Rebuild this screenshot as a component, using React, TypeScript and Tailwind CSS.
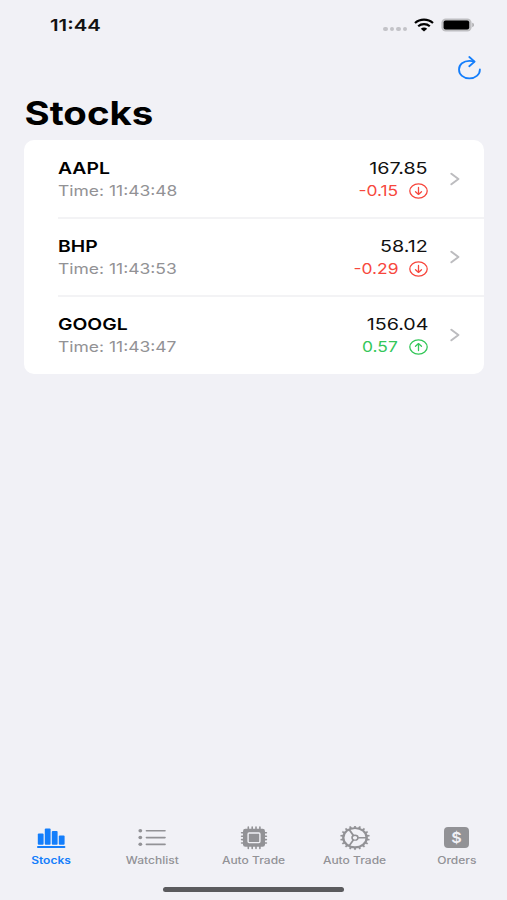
import React from 'react';
import clsx from 'clsx';

interface Stock {
  symbol: string;
  time: string;
  price: string;
  change: string;
  up: boolean;
}

interface Tab {
  label: string;
  icon: React.ReactNode;
  active?: boolean;
}

const stocks: Stock[] = [
  { symbol: 'AAPL', time: '11:43:48', price: '167.85', change: '-0.15', up: false },
  { symbol: 'BHP', time: '11:43:53', price: '58.12', change: '-0.29', up: false },
  { symbol: 'GOOGL', time: '11:43:47', price: '156.04', change: '0.57', up: true },
];

const WifiIcon = () => (
  <svg width="20" height="14" viewBox="0 0 20 14" fill="none" stroke="#000" strokeWidth="2.2">
    <path d="M1 5C6 0.4 14 0.4 19 5" />
    <path d="M4.2 8.2C7.4 5.3 12.6 5.3 15.8 8.2" />
    <path d="M6.8 10.7C8.6 9.2 11.4 9.2 13.2 10.7L10 13.4Z" fill="#000" stroke="none" />
  </svg>
);

const BatteryIcon = () => (
  <svg width="34" height="14" viewBox="0 0 34 14">
    <rect x="0.4" y="0.4" width="30.2" height="13.2" rx="4.4" fill="#bebec1" />
    <rect x="2.6" y="2.6" width="25.6" height="8.8" rx="2" fill="#000" />
    <path d="M31.3 4.8C33.4 5.4 33.4 8.6 31.3 9.2Z" fill="#a5a5a8" />
  </svg>
);

const RefreshIcon = () => (
  <svg width="24" height="24" viewBox="0 0 24 24" fill="none" stroke="#147efb" strokeWidth="1.8" strokeLinecap="round" strokeLinejoin="round">
    <path d="M22.9 13.4C22.9 18.5 18.3 22.4 12.4 22.4C6.5 22.4 2 18.5 2 13.4C2 8.5 6.5 4.9 12.4 4.9C14.1 4.9 15.6 5.1 17 5.6" />
    <path d="M12.3 1L17.6 5.6L12.3 10.2" />
  </svg>
);

const ArrowCircle = ({ up }: { up: boolean }) => (
  <svg width="19" height="16" viewBox="0 0 19 16" fill="none" stroke="currentColor" strokeWidth="1.3" strokeLinecap="round" strokeLinejoin="round">
    <ellipse cx="9.5" cy="8" rx="8.7" ry="7.1" />
    {up ? <path d="M9.5 11.6V4.6M6.5 7.2L9.5 4.6L12.5 7.2" /> : <path d="M9.5 4.4V11.4M6.5 8.8L9.5 11.4L12.5 8.8" />}
  </svg>
);

const Chevron = () => (
  <svg width="10" height="14" viewBox="0 0 10 14" fill="none" stroke="#bcbcbf" strokeWidth="2" strokeLinecap="round" strokeLinejoin="round">
    <path d="M1.4 1.7L8.4 7L1.4 12.3" />
  </svg>
);

const BarsIcon = () => (
  <svg width="30" height="26" viewBox="0 0 30 26" fill="currentColor">
    <rect x="1.8" y="7.4" width="5.8" height="11.4" rx="1" />
    <rect x="8.8" y="2.4" width="5.8" height="16.4" rx="1" />
    <rect x="15.8" y="5" width="5.8" height="13.8" rx="1" />
    <rect x="22.8" y="9.6" width="5.8" height="9.2" rx="1" />
    <rect x="1" y="20" width="28.4" height="1.9" rx="0.9" />
  </svg>
);

const ListIcon = () => (
  <svg width="30" height="26" viewBox="0 0 30 26" fill="currentColor">
    {[4.7, 11.5, 18.3].map((y) => (
      <g key={y}>
        <ellipse cx="3.3" cy={y} rx="1.9" ry="1.7" />
        <rect x="8.6" y={y - 0.8} width="20.2" height="1.7" rx="0.8" />
      </g>
    ))}
  </svg>
);

const ChipIcon = () => (
  <svg width="30" height="26" viewBox="0 0 30 26" fill="none" stroke="currentColor">
    <rect x="4" y="2.8" width="22" height="18" rx="2.4" fill="currentColor" stroke="none" />
    <path d="M9.3 1.1V22.5M13.2 1.1V22.5M17 1.1V22.5M20.9 1.1V22.5M2.6 6.7H27.4M2.6 10.2H27.4M2.6 13.6H27.4M2.6 17H27.4" strokeWidth="1.6" strokeLinecap="round" />
    <rect x="9.1" y="7" width="11.8" height="9.6" rx="1" fill="#929296" stroke="#f0f0f5" strokeWidth="1.4" />
  </svg>
);

const GearIcon = () => (
  <svg width="32" height="26" viewBox="0 0 32 26" fill="none" stroke="currentColor">
    <g transform="translate(16 11.7) scale(1.22 1)">
      <circle r="9.6" strokeWidth="1.9" />
      {Array.from({ length: 18 }, (_, i) => (
        <path key={i} d="M-0.9 -10L-0.6 -12H0.6L0.9 -10Z" fill="currentColor" strokeWidth="0.2" transform={`rotate(${i * 20})`} />
      ))}
      <circle r="2.4" strokeWidth="1.4" />
      <path d="M2.6 0H9.4M-1.3 -2.2L-4.8 -8.2M-1.3 2.2L-4.8 8.2" strokeWidth="1.5" />
    </g>
  </svg>
);

const DollarIcon = () => (
  <div className="mt-[1px] flex h-[21px] w-[25px] items-center justify-center rounded-[4px] bg-[#929296]">
    <span className="scale-x-[1.15] text-[14px] leading-none font-semibold text-[#f0f0f5]">$</span>
  </div>
);

const tabs: Tab[] = [
  { label: 'Stocks', icon: <BarsIcon />, active: true },
  { label: 'Watchlist', icon: <ListIcon /> },
  { label: 'Auto Trade', icon: <ChipIcon /> },
  { label: 'Auto Trade', icon: <GearIcon /> },
  { label: 'Orders', icon: <DollarIcon /> },
];

const StockRow = ({ stock, last }: { stock: Stock; last: boolean }) => (
  <li className="h-[78px] pl-[34px]">
    <div className={clsx('flex h-full items-start pt-[17px] pr-[24px]', !last && 'shadow-[0_1px_0_#f3f3f5,inset_0_-1px_0_#f3f3f5]')}>
      <div className="flex-1">
        <p className="origin-left scale-x-[1.18] text-[16.4px] leading-[22px] font-semibold text-black">{stock.symbol}</p>
        <p className="origin-left scale-x-[1.205] text-[14.5px] leading-[23px] text-[#929295]">Time: {stock.time}</p>
      </div>
      <div className="flex flex-col items-end">
        <p className="origin-right scale-x-[1.2] text-[16.4px] leading-[22px] text-[#111]">{stock.price}</p>
        <div className={clsx('flex h-[23px] items-center gap-[11px]', stock.up ? 'text-[#34c759]' : 'text-[#f7473d]')}>
          <span className="origin-right scale-x-[1.2] text-[14.5px] leading-[23px]">{stock.change}</span>
          <ArrowCircle up={stock.up} />
        </div>
      </div>
      <div className="mt-[15px] ml-[22px]">
        <Chevron />
      </div>
    </div>
  </li>
);

export default function App() {
  return (
    <div className="flex h-[900px] w-[507px] flex-col overflow-hidden bg-[#f1f1f6] font-[Inter,sans-serif]">
      {/* Status bar */}
      <header className="flex h-[49px] items-center justify-between pr-[32px] pl-[50px]">
        <span className="mt-[2px] origin-left scale-x-[1.24] text-[16.4px] leading-none font-semibold text-[#111]">11:44</span>
        <div className="flex items-center">
          <div className="mt-[8px] mr-[7px] flex gap-[2px]">
            {[0, 1, 2, 3].map((i) => (
              <span key={i} className="h-[4px] w-[4.5px] rounded-full bg-[#c3c3c8]" />
            ))}
          </div>
          <WifiIcon />
          <div className="ml-[7px]">
            <BatteryIcon />
          </div>
        </div>
      </header>

      <div className="flex h-[44px] justify-end pt-[7px] pr-[26px]">
        <button className="h-[24px]" aria-label="Refresh">
          <RefreshIcon />
        </button>
      </div>

      <h1 className="h-[47px] origin-left scale-x-[1.17] pl-[21px] text-[32.8px] leading-[40px] font-bold text-black">Stocks</h1>

      <ul className="mr-[23px] ml-[24px] overflow-hidden rounded-[10px] bg-white">
        {stocks.map((stock, i) => (
          <StockRow key={stock.symbol} stock={stock} last={i === stocks.length - 1} />
        ))}
      </ul>

      {/* Tab bar */}
      <nav className="mt-auto flex h-[61px]">
        {tabs.map((tab, i) => (
          <button key={i} className={clsx('flex flex-1 flex-col items-center', tab.active ? 'text-[#147efb]' : 'text-[#929296]')}>
            <span className="flex h-[29px] items-start">{tab.icon}</span>
            <span className={clsx('scale-x-[1.24] text-[9.7px] leading-[12px] whitespace-nowrap', tab.active ? 'font-semibold' : 'font-medium')}>{tab.label}</span>
          </button>
        ))}
      </nav>
      <div className="flex h-[13px] shrink-0 justify-center">
        <div className="h-[5px] w-[181px] rounded-full bg-[#5b5b5e]" />
      </div>
    </div>
  );
}
